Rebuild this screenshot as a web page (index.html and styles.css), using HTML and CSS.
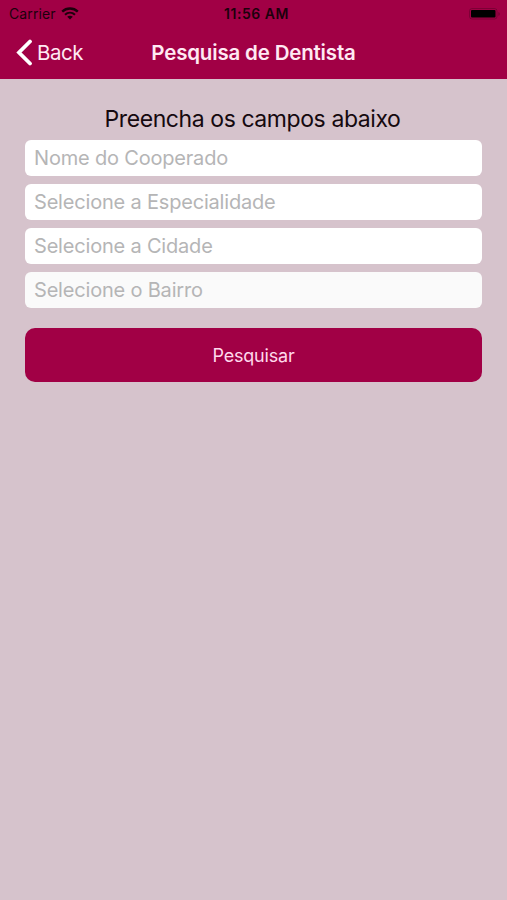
FILE: index.html
```html
<!DOCTYPE html>
<html lang="pt-BR">
<head>
<meta charset="utf-8">
<title>Pesquisa de Dentista</title>
<link rel="stylesheet" href="styles.css">
</head>
<body>
<header class="top">
  <div class="status">
    <div class="carrier">
      <span>Carrier</span>
      <svg class="wifi" width="18" height="13" viewBox="0 0 18 13">
        <path d="M1.2 4.6C5.6.5 12.4.5 16.8 4.6" fill="none" stroke="currentColor" stroke-width="2.4"/>
        <path d="M4 7.7c2.9-2.6 7.1-2.6 10 0" fill="none" stroke="currentColor" stroke-width="2.2"/>
        <path d="M6.2 9.8c1.6-1.4 4-1.4 5.6 0L9 12.5z" fill="currentColor"/>
      </svg>
    </div>
    <span class="time">11:56 AM</span>
    <svg class="battery" width="32" height="12" viewBox="0 0 32 12">
      <rect x=".5" y=".5" width="27.5" height="10.5" rx="2.5" fill="none" stroke="#000" stroke-opacity=".22"/>
      <rect x="2" y="2" width="24.5" height="7.5" rx="1" fill="#000"/>
      <path d="M29.5 4c1.6.7 1.6 3.3 0 4z" fill="#000" fill-opacity=".32"/>
    </svg>
  </div>
  <nav class="nav">
    <a class="back">
      <svg width="17" height="28" viewBox="0 0 17 28"><path d="M14 2.5 3 13.5l11 11" fill="none" stroke="#fff" stroke-width="3.8" stroke-linecap="round"/></svg>
      <span>Back</span>
    </a>
    <h1 class="title">Pesquisa de Dentista</h1>
  </nav>
</header>
<main class="form">
  <h2 class="heading">Preencha os campos abaixo</h2>
  <div class="fields">
    <div class="field"><span>Nome do Cooperado</span></div>
    <div class="field"><span>Selecione a Especialidade</span></div>
    <div class="field"><span>Selecione a Cidade</span></div>
    <div class="field disabled"><span>Selecione o Bairro</span></div>
  </div>
  <button class="submit">Pesquisar</button>
</main>
</body>
</html>
```
FILE: styles.css
```css
* { box-sizing: border-box; }
body {
  margin: 0;
  min-height: 900px;
  background: #d6c3cc;
  font-family: Inter, "Liberation Sans", sans-serif;
  color: #15090f;
}
h1, h2 { margin: 0; }
.top { height: 79px; background: #a10045; }
.status {
  display: grid;
  grid-template-columns: 1fr auto 1fr;
  align-items: center;
  height: 27px;
  padding: 0 6px 0 9px;
  font-size: 14px;
  color: #1c000c;
}
.carrier { display: flex; align-items: center; gap: 5px; letter-spacing: .1px; }
.wifi { color: #1c000c; }
.time { font-weight: 600; font-size: 14px; letter-spacing: .55px; padding-left: 3px; }
.battery { justify-self: end; }
.nav {
  display: grid;
  grid-template-columns: 1fr auto 1fr;
  align-items: center;
  height: 51px;
  padding: 0 16px;
  color: #ffe9f3;
}
.back { display: flex; align-items: center; gap: 4px; font-size: 20.5px; letter-spacing: -.5px; }
.title { font-size: 20.5px; font-weight: 600; letter-spacing: -.18px; }
.form { display: flex; flex-direction: column; padding: 25px 25px 0; }
.heading {
  height: 36px;
  padding-right: 2px;
  line-height: 30px;
  text-align: center;
  font-size: 23px;
  font-weight: 400;
  letter-spacing: -.42px;
}
.fields { display: grid; gap: 8px; }
.field {
  display: flex;
  align-items: center;
  height: 36px;
  padding: 0 9px;
  border-radius: 6px;
  background: #fff;
  color: #b5b5b6;
  font-size: 20px;
  letter-spacing: -.19px;
}
.disabled { background: #fafafa; }
.submit {
  height: 54px;
  margin-top: 20px;
  border: 0;
  border-radius: 10px;
  background: #a10045;
  color: #ffd9ec;
  font: 400 18px Inter, "Liberation Sans", sans-serif;
  letter-spacing: -.2px;
}
```
